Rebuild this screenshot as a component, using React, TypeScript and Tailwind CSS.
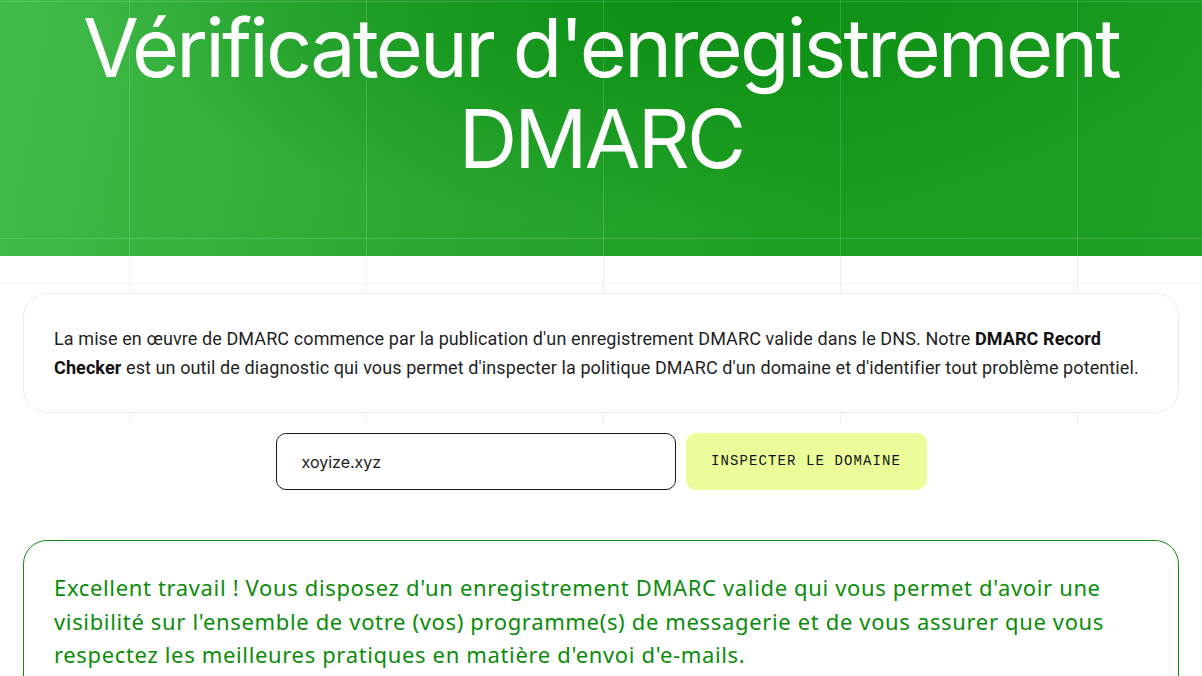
import React from 'react'

export default function App() {
  return (
    <div className="min-h-screen bg-white">
      {/* Hero */}
      <section className="h-[256px] pt-[3px] bg-[linear-gradient(to_right,rgba(255,255,255,0.14)_1px,transparent_1px),linear-gradient(to_bottom,rgba(255,255,255,0.14)_1px,transparent_1px),radial-gradient(ellipse_at_58%_0%,rgba(9,140,18,0.9)_0%,rgba(9,140,18,0)_62%),linear-gradient(100deg,#41bb4a_0%,#2aa62f_40%,#1b9e20_70%,#1fa024_100%)] [background-size:237px_237px,237px_237px,100%_100%,100%_100%] [background-position:129px_0,0_1px,0_0,0_0]">
        <h1 className="text-center text-white text-[81px] leading-[91px] font-normal tracking-[-0.035em] font-['Inter',sans-serif]">
          Vérificateur d'enregistrement
          <br />
          DMARC
        </h1>
      </section>

      <div className="relative">
        {/* decorative grid under hero */}
        <div className="absolute inset-x-0 top-0 h-[167px] bg-[linear-gradient(to_right,#efefef_1px,transparent_1px),linear-gradient(to_bottom,#f3f3f3_1px,transparent_1px)] [background-size:237px_237px,237px_237px] [background-position:129px_0,0_27px]" />

        <div className="relative px-[23px] pt-[37px]">
          {/* Intro card */}
          <div className="bg-white border border-[#ececec] rounded-[24px] py-[30px] pl-[30px] pr-[24px] font-['Roboto',sans-serif] text-[18px] leading-[29px] tracking-[0.1px] text-[#1f1f1f]">
            La mise en œuvre de DMARC commence par la publication d'un enregistrement DMARC valide dans le DNS. Notre{' '}
            <b className="font-bold text-[#111]">DMARC Record Checker</b> est un outil de diagnostic qui vous permet
            d'inspecter la politique DMARC d'un domaine et d'identifier tout problème potentiel.
          </div>

          {/* Form */}
          <div className="flex justify-center gap-[10px] mt-[20px]">
            <input
              defaultValue="xoyize.xyz"
              className="w-[400px] h-[57px] border border-[#1a1a1a] rounded-[10px] pl-[25px] text-[16px] text-[#1a1a1a] font-['Inter',sans-serif] outline-none"
            />
            <button className="w-[241px] h-[57px] rounded-[10px] bg-[#ebfd99] text-[14px] tracking-[1.1px] text-[#111] font-['Liberation_Mono',monospace]">
              INSPECTER LE DOMAINE
            </button>
          </div>

          {/* Result */}
          <div className="mt-[50px] border border-[#0c8f0c] rounded-[24px] px-[30px] pt-[30px] pb-[30px] font-['Noto_Sans',sans-serif] text-[22px] leading-[33.5px] tracking-[0.65px] text-[#0a8c0a]">
            Excellent travail ! Vous disposez d'un enregistrement DMARC valide qui vous permet d'avoir une visibilité sur
            l'ensemble de votre (vos) programme(s) de messagerie et de vous assurer que vous respectez les meilleures
            pratiques en matière d'envoi d'e-mails.
          </div>
        </div>
      </div>
    </div>
  )
}
